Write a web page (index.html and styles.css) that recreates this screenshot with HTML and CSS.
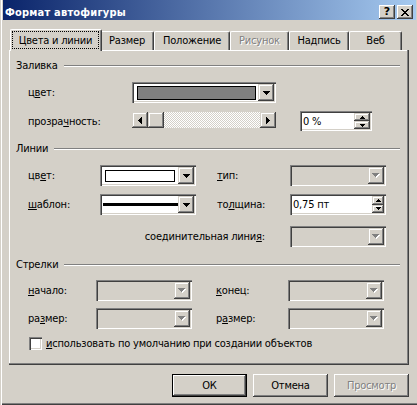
FILE: index.html
```html
<!DOCTYPE html>
<html lang="ru">
<head>
<meta charset="utf-8">
<title>Формат автофигуры</title>
<link rel="stylesheet" href="styles.css">
</head>
<body>
<div class="window">
  <div class="titlebar">
    <span class="title">Формат автофигуры</span>
    <span class="tbtn help">?</span>
    <span class="tbtn close">
      <svg width="8" height="7" viewBox="0 0 8 7" shape-rendering="crispEdges"><path d="M0 0h2v1h-2zM6 0h2v1h-2zM1 1h2v1h-2zM5 1h2v1h-2zM2 2h4v1h-4zM3 3h2v1h-2zM2 4h4v1h-4zM1 5h2v1h-2zM5 5h2v1h-2zM0 6h2v1h-2zM6 6h2v1h-2z"/></svg>
    </span>
  </div>
  <div class="client">
    <div class="tabs">
      <div class="tab active"><span class="focus">Цвета и линии</span></div>
      <div class="tab t-size">Размер</div>
      <div class="tab t-pos">Положение</div>
      <div class="tab t-pic disabled">Рисунок</div>
      <div class="tab t-cap">Надпись</div>
      <div class="tab t-web">Веб</div>
    </div>
    <div class="panel">
      <div class="ghead"><span>Заливка</span><i class="etch"></i></div>
      <div class="row r-fill">
        <span class="lbl">ц<u>в</u>ет:</span>
        <div class="combo">
          <div class="val pad-fill"><span class="swatch gray"></span></div>
          <span class="dd"><svg width="7" height="4" viewBox="0 0 7 4" shape-rendering="crispEdges"><path d="M0 0h7v1h-1v1h-1v1h-1v1h-1v-1h-1v-1h-1v-1h-1z"/></svg></span>
        </div>
      </div>
      <div class="row r-trans">
        <span class="lbl">прозра<u>ч</u>ность:</span>
        <div class="scroll">
          <span class="sarrow"><svg width="4" height="7" viewBox="0 0 4 7" shape-rendering="crispEdges"><path d="M3 0h1v7h-1v-1h-1v-1h-1v-1h-1v-1h1v-1h1v-1h1z"/></svg></span>
          <span class="thumb"></span>
          <span class="track"></span>
          <span class="sarrow"><svg width="4" height="7" viewBox="0 0 4 7" shape-rendering="crispEdges"><path d="M0 0h1v1h1v1h1v1h1v1h-1v1h-1v1h-1v1h-1z"/></svg></span>
        </div>
        <span></span>
        <div class="spin">
          <span class="txt">0 %</span>
          <span class="sbtns">
            <span class="sbtn"><svg width="5" height="3" viewBox="0 0 5 3" shape-rendering="crispEdges"><path d="M2 0h1v1h1v1h1v1h-5v-1h1v-1h1z"/></svg></span>
            <span class="sbtn"><svg width="5" height="3" viewBox="0 0 5 3" shape-rendering="crispEdges"><path d="M0 0h5v1h-1v1h-1v1h-1v-1h-1v-1h-1z"/></svg></span>
          </span>
        </div>
      </div>

      <div class="ghead g2"><span>Линии</span><i class="etch"></i></div>
      <div class="row r-lines r3">
        <span class="lbl">цв<u>е</u>т:</span>
        <div class="combo">
          <div class="val pad-line"><span class="swatch white"></span></div>
          <span class="dd"><svg width="7" height="4" viewBox="0 0 7 4" shape-rendering="crispEdges"><path d="M0 0h7v1h-1v1h-1v1h-1v1h-1v-1h-1v-1h-1v-1h-1z"/></svg></span>
        </div>
        <span></span>
        <span class="lbl"><u>т</u>ип:</span>
        <div class="combo dis">
          <div class="val"></div>
          <span class="dd"><svg width="8" height="5" viewBox="0 0 8 5" shape-rendering="crispEdges"><path fill="#fff" d="M1 1h7v1h-1v1h-1v1h-1v1h-1v-1h-1v-1h-1v-1h-1z"/><path fill="#808080" d="M0 0h7v1h-1v1h-1v1h-1v1h-1v-1h-1v-1h-1v-1h-1z"/></svg></span>
        </div>
      </div>
      <div class="row r-lines r4">
        <span class="lbl"><u>ш</u>аблон:</span>
        <div class="combo">
          <div class="val pad-pattern"><span class="pattern"></span></div>
          <span class="dd"><svg width="7" height="4" viewBox="0 0 7 4" shape-rendering="crispEdges"><path d="M0 0h7v1h-1v1h-1v1h-1v1h-1v-1h-1v-1h-1v-1h-1z"/></svg></span>
        </div>
        <span></span>
        <span class="lbl">то<u>л</u>щина:</span>
        <div class="spin tall">
          <span class="txt">0,75 пт</span>
          <span class="sbtns narrow">
            <span class="sbtn"><svg width="5" height="3" viewBox="0 0 5 3" shape-rendering="crispEdges"><path d="M2 0h1v1h1v1h1v1h-5v-1h1v-1h1z"/></svg></span>
            <span class="sbtn"><svg width="5" height="3" viewBox="0 0 5 3" shape-rendering="crispEdges"><path d="M0 0h5v1h-1v1h-1v1h-1v-1h-1v-1h-1z"/></svg></span>
          </span>
        </div>
      </div>
      <div class="row r-conn">
        <span class="lbl right">соединительная лини<u>я</u>:</span>
        <div class="combo dis">
          <div class="val"></div>
          <span class="dd"><svg width="8" height="5" viewBox="0 0 8 5" shape-rendering="crispEdges"><path fill="#fff" d="M1 1h7v1h-1v1h-1v1h-1v1h-1v-1h-1v-1h-1v-1h-1z"/><path fill="#808080" d="M0 0h7v1h-1v1h-1v1h-1v1h-1v-1h-1v-1h-1v-1h-1z"/></svg></span>
        </div>
      </div>

      <div class="ghead g3"><span>Стрелки</span><i class="etch"></i></div>
      <div class="row r-arrows r6">
        <span class="lbl"><u>н</u>ачало:</span>
        <div class="combo dis">
          <div class="val"></div>
          <span class="dd"><svg width="8" height="5" viewBox="0 0 8 5" shape-rendering="crispEdges"><path fill="#fff" d="M1 1h7v1h-1v1h-1v1h-1v1h-1v-1h-1v-1h-1v-1h-1z"/><path fill="#808080" d="M0 0h7v1h-1v1h-1v1h-1v1h-1v-1h-1v-1h-1v-1h-1z"/></svg></span>
        </div>
        <span></span>
        <span class="lbl"><u>к</u>онец:</span>
        <div class="combo dis">
          <div class="val"></div>
          <span class="dd"><svg width="8" height="5" viewBox="0 0 8 5" shape-rendering="crispEdges"><path fill="#fff" d="M1 1h7v1h-1v1h-1v1h-1v1h-1v-1h-1v-1h-1v-1h-1z"/><path fill="#808080" d="M0 0h7v1h-1v1h-1v1h-1v1h-1v-1h-1v-1h-1v-1h-1z"/></svg></span>
        </div>
      </div>
      <div class="row r-arrows r7">
        <span class="lbl">ра<u>з</u>мер:</span>
        <div class="combo dis">
          <div class="val"></div>
          <span class="dd"><svg width="8" height="5" viewBox="0 0 8 5" shape-rendering="crispEdges"><path fill="#fff" d="M1 1h7v1h-1v1h-1v1h-1v1h-1v-1h-1v-1h-1v-1h-1z"/><path fill="#808080" d="M0 0h7v1h-1v1h-1v1h-1v1h-1v-1h-1v-1h-1v-1h-1z"/></svg></span>
        </div>
        <span></span>
        <span class="lbl">р<u>а</u>змер:</span>
        <div class="combo dis">
          <div class="val"></div>
          <span class="dd"><svg width="8" height="5" viewBox="0 0 8 5" shape-rendering="crispEdges"><path fill="#fff" d="M1 1h7v1h-1v1h-1v1h-1v1h-1v-1h-1v-1h-1v-1h-1z"/><path fill="#808080" d="M0 0h7v1h-1v1h-1v1h-1v1h-1v-1h-1v-1h-1v-1h-1z"/></svg></span>
        </div>
      </div>
      <div class="chkrow">
        <span class="chk"></span>
        <span class="lbl"><u>и</u>спользовать по умолчанию при создании объектов</span>
      </div>
    </div>
    <div class="btns">
      <span class="btn def">ОК</span>
      <span class="btn">Отмена</span>
      <span class="btn disabled">Просмотр</span>
    </div>
  </div>
</div>
</body>
</html>
```
FILE: styles.css
```css
html, body {
  margin: 0;
  padding: 0;
  overflow: hidden;
}
body {
  background: #d4d0c8;
  font-family: "DejaVu Sans Condensed", "DejaVu Sans", sans-serif;
  font-size: 11px;
  letter-spacing: -0.2px;
  color: #000;
}
u { text-underline-offset: 1px; }

.window {
  width: 419px;
  height: 405px;
  box-sizing: border-box;
  padding: 0 3px 3px 3px;
  background: #d4d0c8;
  box-shadow: inset 1px 0 #d4d0c8, inset 2px 0 #fff, inset 0 -1px #404040, inset 0 -2px #808080;
  display: flex;
  flex-direction: column;
}

/* title bar */
.titlebar {
  height: 20px;
  flex: none;
  display: flex;
  align-items: flex-start;
  background: linear-gradient(to right, #0a246a, #a6caf0);
}
.title {
  flex: 1;
  color: #fff;
  font-weight: bold;
  letter-spacing: 0.2px;
  line-height: 13px;
  padding: 6px 0 0 2px;
  white-space: nowrap;
}
.tbtn {
  width: 16px;
  height: 14px;
  margin-top: 5px;
  box-sizing: border-box;
  background: #d4d0c8;
  display: flex;
  align-items: center;
  justify-content: center;
  box-shadow: inset -1px -1px #404040, inset 1px 1px #fff, inset -2px -2px #808080;
}
.tbtn.help {
  margin-right: 2px;
  font-weight: bold;
  font-family: "DejaVu Sans", sans-serif;
  font-size: 11px;
  letter-spacing: 0;
  line-height: 12px;
  padding-bottom: 1px;
}
.tbtn.close { margin-right: 3px; }

/* client */
.client {
  flex: 1;
  display: flex;
  flex-direction: column;
}
.tabs {
  display: flex;
  align-items: flex-start;
  height: 21px;
  margin-top: 9px;
  padding-left: 9px;
}
.tab {
  box-sizing: border-box;
  height: 19px;
  margin-top: 2px;
  border-top: 1px solid #fff;
  border-left: 1px solid #fff;
  border-right: 1px solid #404040;
  border-radius: 2px 2px 0 0;
  box-shadow: inset -1px 0 #808080;
  display: flex;
  align-items: center;
  justify-content: center;
  white-space: nowrap;
  background: #d4d0c8;
  padding-bottom: 1px;
}
.tab.active {
  width: 92px;
  height: 22px;
  margin: 0 -2px;
  position: relative;
  z-index: 1;
  align-items: flex-start;
  padding: 1px 2px 0 1px;
}
.tab .focus {
  flex: 1;
  height: 18px;
  box-sizing: border-box;
  border: 1px dotted #000;
  display: flex;
  align-items: center;
  justify-content: center;
}
.t-size { width: 54px; }
.t-pos { width: 76px; }
.t-pic { width: 59px; }
.t-cap { width: 60px; }
.t-web { width: 53px; }
.disabled {
  color: #808080;
  text-shadow: 1px 1px 0 #fff;
}

/* panel */
.panel {
  width: 400px;
  height: 315px;
  box-sizing: border-box;
  margin-left: 6px;
  padding-top: 8px;
  box-shadow: inset -1px -1px #404040, inset -2px -2px #808080, inset 1px 1px #fff;
  display: flex;
  flex-direction: column;
}
.ghead {
  display: flex;
  align-items: center;
  height: 14px;
  padding: 0 9px 0 7px;
  white-space: nowrap;
  flex: none;
}
.ghead .etch {
  flex: 1;
  height: 0;
  margin-left: 6px;
  margin-top: 2px;
  border-top: 1px solid #808080;
  border-bottom: 1px solid #fff;
}
.g2 { margin-top: 10px; }
.g3 { margin-top: 10px; }

.row {
  display: grid;
  align-items: center;
  height: 21px;
  padding-left: 19px;
  flex: none;
}
.lbl { white-space: nowrap; }
.lbl.right { text-align: right; padding-right: 25px; }
.r-fill { grid-template-columns: 104px 144px; margin-top: 10px; }
.r-trans { grid-template-columns: 104px 144px 24px 72px; height: 20px; margin-top: 8px; }
.r-lines { grid-template-columns: 72px 96px 21px 73px 96px; }
.r3 { margin-top: 10px; }
.r4 { margin-top: 8px; }
.r-conn { grid-template-columns: 262px 96px; margin-top: 11px; }
.r-arrows { grid-template-columns: 68px 96px 24px 72px 96px; }
.r6 { margin-top: 9px; }
.r7 { margin-top: 7px; }

/* sunken field / combo */
.combo, .spin {
  box-sizing: border-box;
  height: 21px;
  padding: 2px;
  display: flex;
  background: #fff;
  box-shadow: inset 1px 1px #808080, inset 2px 2px #404040, inset -1px -1px #fff, inset -2px -2px #d4d0c8;
}
.combo.dis { background: #d4d0c8; }
.val { flex: 1; display: flex; }
.pad-fill { padding: 2px 2px 1px 3px; }
.pad-line { padding: 3px 3px 2px 3px; }
.pad-pattern { padding: 0 0 0 1px; align-items: center; }
.swatch { flex: 1; border: 1px solid #000; }
.swatch.gray { background: #808080; }
.swatch.white { background: #fff; }
.pattern { flex: 1; height: 3px; background: #000; }

.dd, .sarrow, .thumb, .sbtn {
  box-sizing: border-box;
  background: #d4d0c8;
  display: flex;
  align-items: center;
  justify-content: center;
  box-shadow: inset -1px -1px #404040, inset 1px 1px #d4d0c8, inset -2px -2px #808080, inset 2px 2px #fff;
}
.dd { width: 16px; flex: none; }

/* scrollbar */
.scroll {
  display: flex;
  height: 16px;
  align-self: start;
  margin-top: 1px;
}
.sarrow, .thumb { width: 16px; flex: none; }
.track {
  flex: 1;
  background: repeating-conic-gradient(#fff 0 25%, #d4d0c8 0 50%) 0 0 / 2px 2px;
}

/* spinner */
.spin { height: 20px; }
.spin.tall { height: 21px; }
.spin .txt {
  flex: 1;
  display: flex;
  align-items: center;
  padding-left: 1px;
  white-space: nowrap;
}
.sbtns {
  width: 16px;
  display: flex;
  flex-direction: column;
}
.sbtns.narrow { width: 12px; }
.sbtn { flex: 1; }

/* checkbox */
.chkrow {
  display: flex;
  align-items: center;
  height: 13px;
  margin-top: 8px;
  padding-left: 20px;
  flex: none;
}
.chk {
  width: 13px;
  height: 13px;
  box-sizing: border-box;
  margin-right: 4px;
  background: #fff;
  box-shadow: inset 1px 1px #808080, inset 2px 2px #404040, inset -1px -1px #fff, inset -2px -2px #d4d0c8;
}

/* buttons */
.btns {
  display: flex;
  justify-content: flex-end;
  gap: 6px;
  padding-right: 7px;
  margin-top: 9px;
}
.btn {
  width: 75px;
  height: 23px;
  box-sizing: border-box;
  display: flex;
  align-items: center;
  justify-content: center;
  box-shadow: inset -1px -1px #404040, inset 1px 1px #fff, inset -2px -2px #808080;
}
.btn.def {
  box-shadow: inset 0 0 0 1px #000, inset -2px -2px #404040, inset 2px 2px #fff, inset -3px -3px #808080;
}
```
